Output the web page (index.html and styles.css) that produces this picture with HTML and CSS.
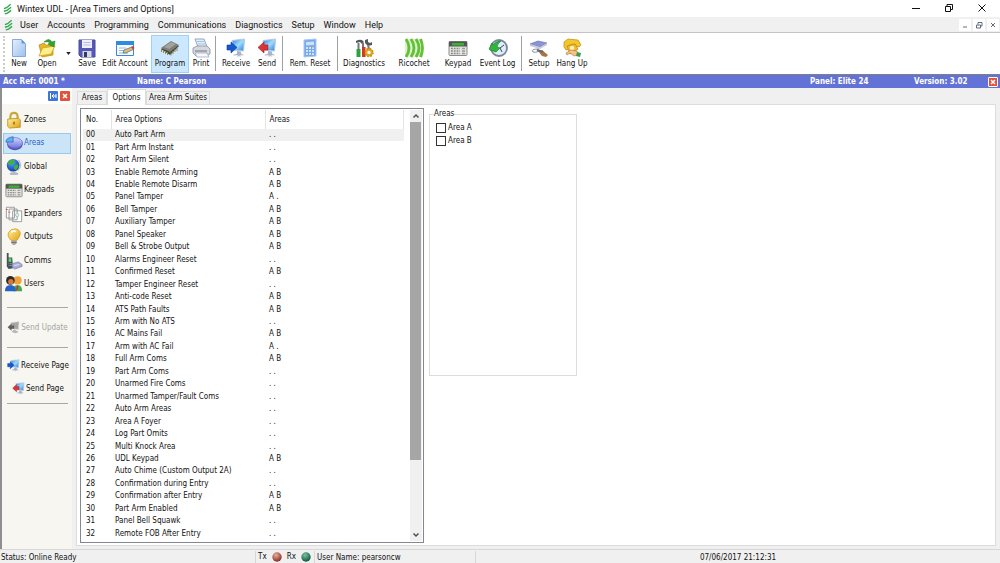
FILE: index.html
```html
<!DOCTYPE html>
<html lang="en">
<head>
<meta charset="utf-8">
<title>Wintex UDL - [Area Timers and Options]</title>
<link rel="stylesheet" href="styles.css">
</head>
<body>
<svg class="defs" aria-hidden="true">
  <defs>
    <linearGradient id="page" x1="0" y1="0" x2="1" y2="1"><stop offset="0" stop-color="#e4effc"/><stop offset="1" stop-color="#9cc1f0"/></linearGradient>
    <linearGradient id="screen" x1="0" y1="0" x2="1" y2="1"><stop offset="0" stop-color="#2f7fe0"/><stop offset=".5" stop-color="#9edcff"/><stop offset="1" stop-color="#2b78d8"/></linearGradient>
    <linearGradient id="gold" x1="0" y1="0" x2="1" y2="1"><stop offset="0" stop-color="#fff2a0"/><stop offset="1" stop-color="#e0a010"/></linearGradient>
    <linearGradient id="violet" x1="0" y1="0" x2="0" y2="1"><stop offset="0" stop-color="#d3d6ff"/><stop offset="1" stop-color="#6c70d8"/></linearGradient>
    <radialGradient id="globe" cx=".4" cy=".3" r=".8"><stop offset="0" stop-color="#5aa8ff"/><stop offset="1" stop-color="#0b2a9a"/></radialGradient>
    <radialGradient id="red" cx=".4" cy=".3" r=".7"><stop offset="0" stop-color="#e8b0a0"/><stop offset="1" stop-color="#8f2a1c"/></radialGradient>
    <radialGradient id="green" cx=".4" cy=".3" r=".7"><stop offset="0" stop-color="#7fc0a0"/><stop offset="1" stop-color="#0b5a3a"/></radialGradient>
    <symbol id="logo" viewBox="0 0 10 12"><g fill="none" stroke="#2fa84c" stroke-width="1.500"><path d="M1 5.500L4 4.500 8.500 .8M1 8.500L4.500 7.500 9 4M2 11.500L5 10.500 9 7.500"/></g></symbol>
    <symbol id="monitor" viewBox="0 0 20 20"><path d="M6 2.500L18.500 1l-1 12-10-1z" fill="url(#screen)" stroke="#b8c8de"/><path d="M11 13l4 .5v2l3 1.500-5 2-6-2 4-1.500z" fill="#a9b4c8"/><path d="M9 17l4 1.500 4-1.500" fill="none" stroke="#eef2f8"/></symbol>
    <symbol id="receive" viewBox="0 0 20 20"><use href="#monitor"/><path d="M1 7h4V4l6 5.500L5 15v-3H1z" fill="#1557d0" stroke="#0a3a9c" stroke-width=".6"/></symbol>
    <symbol id="send" viewBox="0 0 20 20"><use href="#monitor"/><path d="M11 7H7V4L1 9.500 7 15v-3h4z" fill="#d8353a" stroke="#9c1c20" stroke-width=".6"/></symbol>
    <symbol id="dim" viewBox="0 0 20 20"><path d="M6 2.500L18.500 1l-1 12-10-1z" fill="#a5a5a5" stroke="#d5d5d5"/><path d="M11 13l7 4-5 2-6-2z" fill="#b5b5b5"/><path d="M11 7H7V4L1 9.500 7 15v-3h4z" fill="#606060"/></symbol>
    <symbol id="keypad" viewBox="0 0 20 20"><rect x="1" y="3.500" width="18" height="14" rx="1" fill="#e3e3e0" stroke="#8c8c88"/><path d="M1 3.500h18v5H1z" fill="#555"/><path d="M4 5h12v2.500H4z" fill="#39b52c"/><path d="M3 10.500h9M3 13h9M3 15.500h9" stroke="#888" stroke-width="1.300" stroke-dasharray="1.800 1"/><path d="M14 10.500h3M14 13h3M14 15.500h3" stroke="#999" stroke-width="1.300"/></symbol>
  </defs>
</svg>

<div class="app">
  <header class="titlebar">
    <svg class="logo"><use href="#logo"/></svg>
    <h1 class="title">Wintex UDL - [Area Timers and Options]</h1>
    <button class="win" aria-label="Minimize"><svg viewBox="0 0 10 10"><path d="M1 5.500h8"/></svg></button>
    <button class="win" aria-label="Restore"><svg viewBox="0 0 10 10"><path d="M1.500 3.500h5v5h-5zM3 3V1.500h5.500v5H7"/></svg></button>
    <button class="win" aria-label="Close"><svg viewBox="0 0 10 10"><path d="M1.500 1.500l7 7M8.500 1.500l-7 7"/></svg></button>
  </header>

  <nav class="menubar" aria-label="Main menu">
    <svg class="logo"><use href="#logo"/></svg>
    <button>User</button><button>Accounts</button><button>Programming</button><button>Communications</button><button>Diagnostics</button><button>Setup</button><button>Window</button><button>Help</button>
    <div class="mdi">
      <button aria-label="Minimize page"><svg viewBox="0 0 8 8"><path d="M2 6h4"/></svg></button>
      <button aria-label="Restore page"><svg viewBox="0 0 8 8"><path d="M1.500 4h4v3h-4zM3 3.500V1.500h4V5H6"/></svg></button>
      <button aria-label="Close page"><svg viewBox="0 0 8 8"><path d="M2 2l4 4M6 2L2 6"/></svg></button>
    </div>
  </nav>

  <div class="toolbar" role="toolbar" aria-label="Tools">
    <button class="tool w28"><svg viewBox="0 0 20 20"><path d="M3.500 1.500h9l4 4v13h-13z" fill="url(#page)" stroke="#8aa8d8"/><path d="M12.500 1.500l4 4h-4z" fill="#5b9be8"/></svg>New</button>
    <button class="tool w28"><svg viewBox="0 0 20 20"><path d="M2 7l5-2 2 2h7v10L5 19z" fill="#e6b626" stroke="#b98812" stroke-width=".7"/><path d="M2 18l3.500-8L18 8l-4 8z" fill="#fff08a" stroke="#c99a18" stroke-width=".7"/><path d="M7 4q5-5 8 0l3-1-1 6-6-3 2-1Q11 3 7 4z" fill="#2ea52e" stroke="#147a1a" stroke-width=".5"/></svg>Open</button>
    <button class="drop" aria-label="Recent accounts"><svg viewBox="0 0 6 4"><path d="M0 0h6L3 4z" fill="#222"/></svg></button>
    <button class="tool w24"><svg viewBox="0 0 20 20"><path d="M2 2h16v17H4l-2-2z" fill="#5558b8" stroke="#4a4d9e"/><path d="M5 2h10v8H5z" fill="#eef0fb"/><path d="M6.500 4.500h7M6.500 7h7" stroke="#b7bbdd"/><path d="M5.500 13h9v6h-9z" fill="#d8d8e0"/><path d="M7 14h3v5H7z" fill="#333a66"/></svg>Save</button>
    <button class="tool w52"><svg viewBox="0 0 20 20"><path d="M1.500 3.500h17v14h-17z" fill="#f4faff" stroke="#3f86cc"/><path d="M1 3h18v4H1z" fill="#2f8be0"/><path d="M4 10h7M4 12.500h5M4 15h9" stroke="#9bbcd8"/><path d="M8 15l1-3 8-3 2 2-8 4z" fill="#e8b870" stroke="#3c6b94" stroke-width=".7"/><path d="M16 9l2-1 1.500 2-1.500 1.500z" fill="#d83b2e"/></svg>Edit Account</button>
    <button class="tool w38 active"><svg viewBox="0 0 20 20"><path d="M1 11L11 4l8 4-9 9z" fill="#44443f"/><path d="M1 10L11 3l8 4-9 7z" fill="#7d7e76"/><path d="M4 9l7-5 5 2-7 5z" fill="#a2a49a"/><path d="M1.500 11v3M3.500 12v3M5.500 13v3M7.500 14v3M11 14.500v3M13 13v3M15 11v3M17 10v3" stroke="#8f8749"/></svg>Program</button>
    <button class="tool w24"><svg viewBox="0 0 20 20"><path d="M4 1h9l3 8H7z" fill="#e5effc" stroke="#92a5c5"/><path d="M6 3.500h7M7 6h7" stroke="#a9bedb"/><path d="M2 10l4-2h10l3 3v5l-4 2H5l-3-3z" fill="#d5d8df" stroke="#8c919e" stroke-width=".8"/><path d="M4 13h12" stroke="#6f7582"/><path d="M4 15h12l2 4H6z" fill="#f7f9fc" stroke="#9aa3b4" stroke-width=".7"/></svg>Print</button>
    <span class="sep"></span>
    <button class="tool w36"><svg><use href="#receive"/></svg>Receive</button>
    <button class="tool w26"><svg><use href="#send"/></svg>Send</button>
    <span class="sep"></span>
    <button class="tool w50"><svg viewBox="0 0 20 20"><path d="M4 2l12-1v17l-12 1z" fill="#76a9ea" stroke="#a8c6ee"/><path d="M6 4l8-.5V7L6 7.500z" fill="#c7e2ff"/><path d="M6 10h8M6 13h8M6 16h8" stroke="#eaf4ff" stroke-width="1.600" stroke-dasharray="2 1"/><path d="M12 9h2" stroke="#f0a060"/></svg>Rem. Reset</button>
    <span class="sep"></span>
    <button class="tool w48"><svg viewBox="0 0 20 20"><path d="M2 3q3-2 6-1l2 2-2 2-2-2-4 1zM11 2l3-1v3l2 1 2-1v3l-4 1-3-3z" fill="#55585c"/><path d="M4.500 5v6M9 5v5M14 7l1 4" stroke="#777" stroke-width="2"/><path d="M2.500 11h4v8h-4z" fill="#2aa43a"/><path d="M8 9h3.500v10H8z" fill="#d93328"/><circle cx="15" cy="14.500" r="2.800" fill="none" stroke="#dfa719" stroke-width="2.200"/><circle cx="15" cy="14.500" r="4" fill="none" stroke="#c48b12" stroke-width="1.500" stroke-dasharray="1.700 1.440"/></svg>Diagnostics</button>
    <button class="tool w52"><svg viewBox="0 0 20 20"><path d="M1 1h18v18H1z" fill="#d9f2c8"/><g fill="none" stroke="#64bf38" stroke-width="2.800"><path d="M2 1q6 9 0 18M7 1q6 9 0 18M12 1q6 9 0 18M16.500 1q4 9 0 18"/></g></svg>Ricochet</button>
    <button class="tool w36"><svg><use href="#keypad"/></svg>Keypad</button>
    <button class="tool w43"><svg viewBox="0 0 20 20"><circle cx="11" cy="10" r="8" fill="#dceefa" stroke="#7c8794" stroke-width="1.800"/><path d="M12 10l4-3M12 10l2 4" stroke="#445"/><path d="M1 11l3-6 1 2q3-4 8-4-4 3-4 6l3 1-4 4-6-2z" fill="#2fb43c" stroke="#127a22" stroke-width=".6"/></svg>Event Log</button>
    <span class="sep"></span>
    <button class="tool w30"><svg viewBox="0 0 20 20"><path d="M1 6l8-3 9 2-7 4z" fill="#8795d8" stroke="#5d68a8" stroke-width=".6"/><path d="M1 6l10 3v2L1 8zM11 9l7-4v2l-7 4z" fill="#c6c8dc"/><path d="M10 11q-9 0-6 3 2 1 7-1" fill="none" stroke="#8b8f9c"/><path d="M9 13l4-1 6 5-2 2-4-1z" fill="#a8763e"/><path d="M8 12l6 2" stroke="#666b76" stroke-width="2"/></svg>Setup</button>
    <button class="tool w36"><svg viewBox="0 0 20 20"><path d="M2 4l4-3 10 1 3 5-2 2-3-1-1-2-6 1v4l-3 1-2-3z" fill="#f4c62c" stroke="#c08a10" stroke-width=".7"/><path d="M5 8l8-2 3 5-8 5z" fill="#f0bc24" stroke="#b98413" stroke-width=".7"/><circle cx="10" cy="10" r="2.200" fill="#fff3c0"/><path d="M4 15l5-3 6 1 1 4-4 1-4-3-3 2z" fill="#f2c38a" stroke="#a8733a" stroke-width=".6"/><path d="M15 14l4 1-1 4-4-1z" fill="#3e9a4a"/></svg>Hang Up</button>
  </div>

  <div class="account">
    <span class="ref">Acc Ref: 0001 *</span><span class="name">Name: C Pearson</span><span class="panel">Panel: Elite 24</span><span class="version">Version: 3.02</span>
    <button class="close" aria-label="Close account"><svg viewBox="0 0 8 8"><path d="M2 2l4 4M6 2L2 6"/></svg></button>
  </div>

  <div class="work">
    <aside class="sidebar">
      <div class="side-head">
        <button class="pin" aria-label="Pin"><svg viewBox="0 0 8 8"><path d="M1.500 1v6M3 4h4M5 2L3 4l2 2M7 2v4"/></svg></button>
        <button class="close" aria-label="Close sidebar"><svg viewBox="0 0 8 8"><path d="M2 2l4 4M6 2L2 6"/></svg></button>
      </div>
      <nav class="pages" aria-label="Pages">
        <button><svg viewBox="0 0 20 20"><path d="M6 10V6q0-4 4-4t4 4v4" fill="none" stroke="#c9a83a" stroke-width="2.400"/><path d="M3 9l12-1 2 2v8L5 19l-2-2z" fill="url(#gold)" stroke="#b5820c" stroke-width=".8"/><path d="M10 12v3" stroke="#8a5c00" stroke-width="1.500"/></svg>Zones</button>
        <button class="active"><svg viewBox="0 0 20 20"><ellipse cx="11" cy="12" rx="8.500" ry="6" fill="#5357b8"/><ellipse cx="11" cy="10" rx="8.500" ry="6" fill="url(#violet)" stroke="#5b60be" stroke-width=".7"/><path d="M9 9H1q0-5 8-6z" fill="#61aef5" stroke="#2866b8" stroke-width=".8"/></svg>Areas</button>
        <button><svg viewBox="0 0 20 20"><path d="M15 2q5 7-1 12" fill="none" stroke="#b8bcc8" stroke-width="1.500"/><path d="M5 17q5-3 10 0l-1 2H6z" fill="#b5bac8"/><circle cx="9" cy="8" r="7" fill="url(#globe)"/><path d="M4 4q4-4 7-1l-2 4-3 1-3-1zM10 9l4-2 1 3-3 4-2-2z" fill="#3cb444"/></svg>Global</button>
        <button><svg><use href="#keypad"/></svg>Keypads</button>
        <button><svg viewBox="0 0 20 20"><g fill="#fff" stroke="#8f9398"><path d="M1.500 2.500h9v12h-9zM4.500 4.500h9v12h-9zM8.500 6.500h10v12h-10z"/></g><path d="M1 5h2M4 8h2" stroke="#d64b3c"/><circle cx="13.500" cy="11" r="2" fill="#d7f2d9" stroke="#70b878" stroke-width=".6"/></svg>Expanders</button>
        <button><svg viewBox="0 0 20 20"><path d="M7 14Q2 9 4 5q2-4 7-4t6 5q0 3-4 8z" fill="url(#gold)" stroke="#e39b10"/><path d="M7 5q2-3 5-1" fill="none" stroke="#fff" stroke-width="2"/><path d="M7 14h6v3l-2 2H9l-2-2z" fill="#a6a8ac"/><path d="M7 16h6" stroke="#666"/></svg>Outputs</button>
        <button><svg viewBox="0 0 20 20"><path d="M2 1h2v5h4l1 12-5 1-2-3z" fill="#43505a"/><path d="M4 7h3v4H4z" fill="#58d860"/><path d="M4 13h4M4 15h4" stroke="#9aa" stroke-dasharray="1 .5"/><path d="M8 13l7-2 4 3v2l-8 3-3-2z" fill="#a9acd4" stroke="#7578ac" stroke-width=".7"/><path d="M10 15l6-1" stroke="#e6e8ff"/></svg>Comms</button>
        <button><svg viewBox="0 0 20 20"><circle cx="14" cy="6" r="4.500" fill="#f0a23c"/><path d="M9 18q0-7 5-7t5 7z" fill="#46a84c"/><circle cx="6" cy="6" r="4.800" fill="#2e2a2a"/><circle cx="6.500" cy="7.500" r="3" fill="#d87938"/><path d="M0 18q0-7 6-7t6 7z" fill="#2461c8"/><path d="M14 12l-1 5" stroke="#c92f25" stroke-width="1.500"/></svg>Users</button>
      </nav>
      <div class="actions">
        <button class="update" disabled><svg><use href="#dim"/></svg>Send Update</button>
        <div class="pair">
          <button><svg><use href="#receive"/></svg>Receive Page</button>
          <button><svg><use href="#send"/></svg>Send Page</button>
        </div>
      </div>
    </aside>

    <main class="content">
      <div class="tabs" role="tablist">
        <button role="tab" aria-selected="false">Areas</button><button role="tab" aria-selected="true">Options</button><button role="tab" aria-selected="false">Area Arm Suites</button>
      </div>
      <section class="tabpage">
        <div class="list">
          <table>
            <thead><tr><th class="no">No.</th><th class="opt">Area Options</th><th>Areas</th></tr></thead>
            <tbody>
              <tr class="selected"><td>00</td><td>Auto Part Arm</td><td>. .</td></tr>
              <tr><td>01</td><td>Part Arm Instant</td><td>. .</td></tr>
              <tr><td>02</td><td>Part Arm Silent</td><td>. .</td></tr>
              <tr><td>03</td><td>Enable Remote Arming</td><td>A B</td></tr>
              <tr><td>04</td><td>Enable Remote Disarm</td><td>A B</td></tr>
              <tr><td>05</td><td>Panel Tamper</td><td>A .</td></tr>
              <tr><td>06</td><td>Bell Tamper</td><td>A B</td></tr>
              <tr><td>07</td><td>Auxiliary Tamper</td><td>A B</td></tr>
              <tr><td>08</td><td>Panel Speaker</td><td>A B</td></tr>
              <tr><td>09</td><td>Bell &amp; Strobe Output</td><td>A B</td></tr>
              <tr><td>10</td><td>Alarms Engineer Reset</td><td>. .</td></tr>
              <tr><td>11</td><td>Confirmed Reset</td><td>A B</td></tr>
              <tr><td>12</td><td>Tamper Engineer Reset</td><td>. .</td></tr>
              <tr><td>13</td><td>Anti-code Reset</td><td>A B</td></tr>
              <tr><td>14</td><td>ATS Path Faults</td><td>A B</td></tr>
              <tr><td>15</td><td>Arm with No ATS</td><td>. .</td></tr>
              <tr><td>16</td><td>AC Mains Fail</td><td>A B</td></tr>
              <tr><td>17</td><td>Arm with AC Fail</td><td>A .</td></tr>
              <tr><td>18</td><td>Full Arm Coms</td><td>A B</td></tr>
              <tr><td>19</td><td>Part Arm Coms</td><td>. .</td></tr>
              <tr><td>20</td><td>Unarmed Fire Coms</td><td>. .</td></tr>
              <tr><td>21</td><td>Unarmed Tamper/Fault Coms</td><td>. .</td></tr>
              <tr><td>22</td><td>Auto Arm Areas</td><td>. .</td></tr>
              <tr><td>23</td><td>Area A Foyer</td><td>. .</td></tr>
              <tr><td>24</td><td>Log Part Omits</td><td>. .</td></tr>
              <tr><td>25</td><td>Multi Knock Area</td><td>. .</td></tr>
              <tr><td>26</td><td>UDL Keypad</td><td>A B</td></tr>
              <tr><td>27</td><td>Auto Chime (Custom Output 2A)</td><td>. .</td></tr>
              <tr><td>28</td><td>Confirmation during Entry</td><td>. .</td></tr>
              <tr><td>29</td><td>Confirmation after Entry</td><td>A B</td></tr>
              <tr><td>30</td><td>Part Arm Enabled</td><td>A B</td></tr>
              <tr><td>31</td><td>Panel Bell Squawk</td><td>. .</td></tr>
              <tr><td>32</td><td>Remote FOB After Entry</td><td>. .</td></tr>
            </tbody>
          </table>
          <div class="scroll">
            <button aria-label="Scroll up"><svg viewBox="0 0 8 8"><path d="M1.500 5.500L4 3l2.500 2.500"/></svg></button>
            <div class="track"><div class="thumb"></div></div>
            <button aria-label="Scroll down"><svg viewBox="0 0 8 8"><path d="M1.500 2.500L4 5l2.500-2.500"/></svg></button>
          </div>
        </div>
        <fieldset class="group">
          <legend>Areas</legend>
          <label><input type="checkbox">Area A</label>
          <label><input type="checkbox">Area B</label>
        </fieldset>
      </section>
    </main>
  </div>

  <footer class="status">
    <span class="state">Status: Online Ready</span>
    <span class="lights">Tx <svg viewBox="0 0 10 10"><circle cx="5" cy="5" r="4.700" fill="url(#red)"/></svg> Rx <svg viewBox="0 0 10 10"><circle cx="5" cy="5" r="4.700" fill="url(#green)"/></svg></span>
    <span class="user">User Name: pearsoncw</span>
    <time class="clock">07/06/2017 21:12:31</time>
  </footer>
</div>
</body>
</html>
```

FILE: styles.css
```css
* { box-sizing: border-box; }
body { margin: 0; font: 8px/10px "DejaVu Sans Condensed", "Open Sans", sans-serif; color: #111; background: #f0f0f0; }
button { font: inherit; color: inherit; background: none; border: 0; padding: 0; margin: 0; white-space: nowrap; }
svg { display: block; flex: none; }
.defs { position: absolute; width: 0; height: 0; }
.app { display: flex; flex-direction: column; min-height: 100vh; }

.logo { width: 9px; height: 12px; }
.titlebar, .menubar { font-family: Roboto, "Open Sans", sans-serif; font-size: 9px; }
.titlebar { display: flex; align-items: center; height: 17px; padding-left: 3px; background: #fff; }
.title { flex: 1; margin: 0 0 0 5px; font-size: 9px; font-weight: 400; }
.win { width: 33px; height: 17px; padding-bottom: 2px; display: flex; align-items: center; justify-content: center; }
.win:last-child { margin-right: 2px; }
.win svg { width: 10px; height: 10px; fill: none; stroke: #111; }

.menubar { display: flex; align-items: center; height: 15px; padding-left: 4px; background: #f0f0f0; }
.menubar > button { padding: 0 4px 0 5px; }
.menubar .logo + button { margin-left: 2px; }
.mdi { display: flex; gap: 2px; margin-left: auto; padding-right: 1px; }
.mdi button { width: 12px; height: 12px; padding: 2px; background: #fff; }
.mdi svg { width: 8px; height: 8px; fill: none; stroke: #5f6f82; }

.toolbar { display: flex; align-items: center; height: 42px; padding-left: 5px; background: #fff; border-top: 1px solid #c4c4c4; }
.toolbar::before { content: ""; width: 0; height: 36px; margin: 0 0 0 -2px; border-left: 2px dotted #ccc; }
.tool { display: flex; flex-direction: column; align-items: center; gap: 1px; height: 38px; padding-top: 3px; }
.tool svg { width: 20px; height: 20px; }
.tool.active { background: #cce8ff; border: 1px solid #99d1ff; padding-top: 2px; }
.drop { width: 14px; height: 38px; display: flex; align-items: center; justify-content: center; }
.drop svg { width: 5px; height: 3px; }
.sep { width: 1px; height: 35px; margin: 0 2px; background: #a0a0a0; }
.w24 { width: 24px; }
.w26 { width: 26px; }
.w28 { width: 28px; }
.w30 { width: 30px; }
.w36 { width: 36px; }
.w38 { width: 38px; }
.w43 { width: 43px; }
.w48 { width: 48px; }
.w50 { width: 50px; }
.w52 { width: 52px; }

.account { display: flex; align-items: center; height: 14px; padding: 0 2px 0 3px; border-top: 1px solid #808080; background: #6272d6; color: #fff; font-weight: 700; }
.ref { width: 134px; }
.name { flex: 1; }
.panel { width: 104px; }
.version { width: 74px; }
.close, .pin { width: 10px; height: 10px; padding: 1px; border-radius: 1px; background: #e0533a; }
.pin { background: #3f74d8; }
.account .close { border: 1px solid #fff; padding: 0; }
.close svg, .pin svg { width: 8px; height: 8px; fill: none; stroke: #fff; }
.close svg { stroke-width: 1.5; }

.work { flex: 1; display: flex; }
.sidebar { width: 72px; margin-right: 4px; border-left: 2px solid #8f8f8f; background: #f7f6f0; }
.side-head { display: flex; justify-content: flex-end; align-items: center; gap: 2px; height: 16px; padding-right: 2px; background: #fff; }
.pages { display: grid; grid-auto-rows: 1fr; height: 188px; margin: 4px 1px 0; }
.pages button { display: flex; align-items: center; gap: 1px; margin: 1px 0; padding-left: 1px; border: 1px solid transparent; }
.pages svg { width: 18px; height: 18px; }
.pages .active { background: #cce4f7; border-color: #99c9ef; color: #2a62c8; }
.actions { display: flex; flex-direction: column; margin: 11px 4px 0 5px; border-top: 1px solid #a8a8a8; border-bottom: 1px solid #a8a8a8; }
.actions button { display: flex; align-items: center; justify-content: center; gap: 1px; }
.actions svg { width: 13px; height: 13px; }
.actions .update { height: 40px; color: #a5a5a5; border-bottom: 1px solid #a8a8a8; }
.pair { display: grid; gap: 10px; padding: 11px 0 8px; }

.content { flex: 1; display: flex; flex-direction: column; padding: 1px 4px 3px 0; }
.tabs { display: flex; align-items: flex-end; height: 15px; padding-left: 1px; }
.tabs button { height: 13px; min-width: 30px; padding: 0 2px; border: 1px solid #dcdcdc; border-bottom: 0; }
.tabs [aria-selected="true"] { height: 16px; min-width: 39px; margin-bottom: -1px; background: #fff; z-index: 1; }
.tabpage { flex: 1; display: flex; align-items: flex-start; gap: 5px; padding: 3px 3px 2px; background: #fff; border: 1px solid #dcdcdc; }
.list { display: flex; align-self: stretch; width: 344px; padding: 1px 1px 2px 2px; border: 1px solid #828790; }
table { flex: 1; border-collapse: collapse; table-layout: fixed; margin-right: 6px; }
th, td { padding: 0 4px; text-align: left; font-weight: 400; white-space: nowrap; line-height: 10px; }
th { height: 19px; border-right: 1px solid #e3e3e3; }
.no { width: 28px; }
.opt { width: 154px; }
td:first-child, th:first-child { padding-left: 3px; }
.selected { background: #f0f0f0; }
.scroll { display: flex; flex-direction: column; width: 12px; margin-bottom: -1px; background: #f0f0f0; }
.scroll button { height: 12px; padding: 2px; }
.scroll svg { width: 8px; height: 8px; fill: none; stroke: #505050; stroke-width: 1.5; }
.track { flex: 1; }
.thumb { height: 83%; margin-right: 1px; background: #a6a6a6; }
.group { width: 148px; height: 267px; margin: 1px 0 0; padding: 2px 5px; border: 1px solid #dcdcdc; }
legend { margin-left: -1px; padding: 0; line-height: 10px; }
.group label { display: flex; align-items: center; gap: 2px; height: 13px; }
.group input { appearance: none; width: 10px; height: 10px; margin: 0 0 0 1px; border: 1px solid #333; background: #fff; }

.status { display: flex; align-items: center; height: 14px; border-top: 1px solid #d7d7d7; }
.status > * { height: 12px; line-height: 13px; }
.state { width: 256px; padding-left: 1px; border-right: 1px solid #d7d7d7; }
.lights { display: flex; align-items: center; gap: 5px; width: 59px; padding-left: 2px; border-right: 1px solid #d7d7d7; }
.lights svg { width: 10px; height: 10px; }
.user { width: 161px; padding-left: 2px; border-right: 1px solid #d7d7d7; }
.clock { flex: 1; text-align: center; }
```
